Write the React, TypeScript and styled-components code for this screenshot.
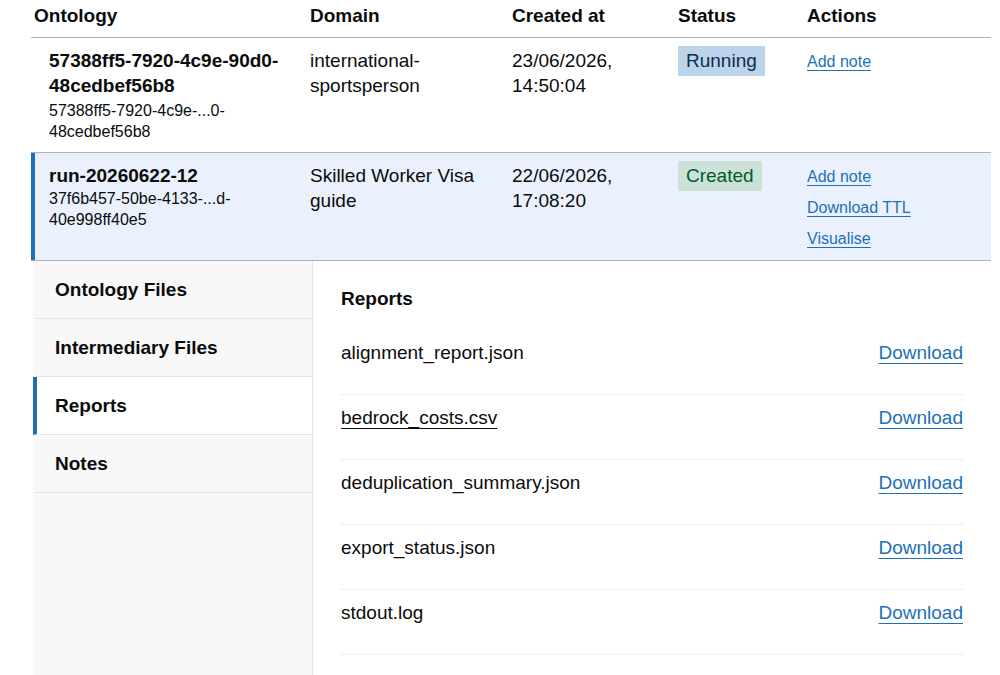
import React from 'react';
import styled, { createGlobalStyle } from 'styled-components';

const GlobalStyle = createGlobalStyle`
  html, body {
    margin: 0;
    padding: 0;
    overflow: hidden;
    background: #ffffff;
  }
  body {
    font-family: "Liberation Sans", Arial, sans-serif;
    color: #0b0c0c;
    font-size: 19px;
    line-height: 25px;
  }
`;

const Page = styled.div`
  display: flex;
  flex-direction: column;
  height: 100vh;
  padding-left: 31px;
  width: 960px;
`;

const Grid = styled.div`
  display: grid;
  grid-template-columns: 279px 202px 166px 129px 184px;
`;

const HeadRow = styled(Grid)`
  border-bottom: 1px solid #b1b4b6;
`;

const HeadCell = styled.div<{ $first?: boolean }>`
  font-weight: 700;
  padding: 3px 20px 9px ${(p) => (p.$first ? '3px' : '0')};
`;

const Row = styled(Grid)<{ $selected?: boolean }>`
  background: ${(p) => (p.$selected ? '#eaf1fc' : 'transparent')};
  border-top: ${(p) => (p.$selected ? '1px solid #b1b4b6' : '0')};
  border-bottom: ${(p) => (p.$selected ? '1px solid #b1b4b6' : '0')};
  box-shadow: ${(p) => (p.$selected ? 'inset 4px 0 0 #1d70b8' : 'none')};
`;

const Cell = styled.div<{ $first?: boolean }>`
  padding: 10px 20px 10px ${(p) => (p.$first ? '18px' : '0')};
`;

const RunName = styled.div`
  font-weight: 700;
`;

const RunId = styled.div<{ $gap?: boolean }>`
  font-size: 16px;
  line-height: 21px;
  margin-top: ${(p) => (p.$gap ? '2px' : '0')};
`;

const Tag = styled.span<{ $tone: 'blue' | 'green' }>`
  display: inline-block;
  padding: 2px 8px 3px;
  background: ${(p) => (p.$tone === 'blue' ? '#bbd4ea' : '#cce2d8')};
  color: ${(p) => (p.$tone === 'blue' ? '#0c2d4a' : '#005a30')};
  line-height: 25px;
  margin-top: -2px;
`;

const Actions = styled.div`
  display: flex;
  flex-direction: column;
  align-items: flex-start;
  gap: 6px;
  margin: 1px 0 -1px;
`;

const SmallLink = styled.a`
  font-size: 16px;
  line-height: 25px;
  color: #1d70b8;
  text-decoration: underline;
  text-decoration-thickness: 1px;
  text-underline-offset: 3px;
  cursor: pointer;
`;

const Expanded = styled.div`
  flex: 1;
  display: flex;
  margin-left: 2px;
  min-height: 0;
`;

const SideNav = styled.nav`
  width: 279px;
  background: #f8f8f8;
  border-right: 1px solid #e6e6e6;
  display: flex;
  flex-direction: column;
`;

const NavItem = styled.div<{ $active?: boolean }>`
  font-weight: 700;
  padding: 16px 10px 16px 18px;
  border-left: 4px solid ${(p) => (p.$active ? '#1d70b8' : 'transparent')};
  border-bottom: 1px solid #e5e5e5;
  background: ${(p) => (p.$active ? '#ffffff' : 'transparent')};
`;

const Panel = styled.section`
  flex: 1;
  padding: 25px 28px;
`;

const PanelTitle = styled.h2`
  margin: 0 0 19px;
  font-size: 19px;
  line-height: 25px;
  font-weight: 700;
`;

const FileRow = styled.div`
  display: flex;
  justify-content: space-between;
  align-items: flex-start;
  padding: 10px 0 29px;
  border-bottom: 1px solid #eeeeee;
`;

const FileName = styled.span<{ $hover?: boolean }>`
  text-decoration: ${(p) => (p.$hover ? 'underline' : 'none')};
  text-decoration-thickness: 1px;
  text-underline-offset: 4px;
`;

const DownloadLink = styled.a`
  color: #1d70b8;
  text-decoration: underline;
  text-decoration-thickness: 1px;
  text-underline-offset: 4px;
  cursor: pointer;
`;

const files = [
  'alignment_report.json',
  'bedrock_costs.csv',
  'deduplication_summary.json',
  'export_status.json',
  'stdout.log',
];

const App: React.FC = () => {
  return (
    <>
      <GlobalStyle />
      <Page>
        <HeadRow>
          <HeadCell $first>Ontology</HeadCell>
          <HeadCell>Domain</HeadCell>
          <HeadCell>Created at</HeadCell>
          <HeadCell>Status</HeadCell>
          <HeadCell>Actions</HeadCell>
        </HeadRow>

        <Row>
          <Cell $first>
            <RunName>57388ff5-7920-4c9e-90d0-48cedbef56b8</RunName>
            <RunId $gap>57388ff5-7920-4c9e-...0-48cedbef56b8</RunId>
          </Cell>
          <Cell>international-sportsperson</Cell>
          <Cell>23/06/2026, 14:50:04</Cell>
          <Cell>
            <Tag $tone="blue">Running</Tag>
          </Cell>
          <Cell>
            <Actions>
              <SmallLink>Add note</SmallLink>
            </Actions>
          </Cell>
        </Row>

        <Row $selected>
          <Cell $first>
            <RunName>run-20260622-12</RunName>
            <RunId>37f6b457-50be-4133-...d-40e998ff40e5</RunId>
          </Cell>
          <Cell>Skilled Worker Visa guide</Cell>
          <Cell>22/06/2026, 17:08:20</Cell>
          <Cell>
            <Tag $tone="green">Created</Tag>
          </Cell>
          <Cell>
            <Actions>
              <SmallLink>Add note</SmallLink>
              <SmallLink>Download TTL</SmallLink>
              <SmallLink>Visualise</SmallLink>
            </Actions>
          </Cell>
        </Row>

        <Expanded>
          <SideNav>
            <NavItem>Ontology Files</NavItem>
            <NavItem>Intermediary Files</NavItem>
            <NavItem $active>Reports</NavItem>
            <NavItem>Notes</NavItem>
          </SideNav>
          <Panel>
            <PanelTitle>Reports</PanelTitle>
            {files.map((f) => (
              <FileRow key={f}>
                <FileName $hover={f === 'bedrock_costs.csv'}>{f}</FileName>
                <DownloadLink>Download</DownloadLink>
              </FileRow>
            ))}
          </Panel>
        </Expanded>
      </Page>
    </>
  );
};

export default App;
